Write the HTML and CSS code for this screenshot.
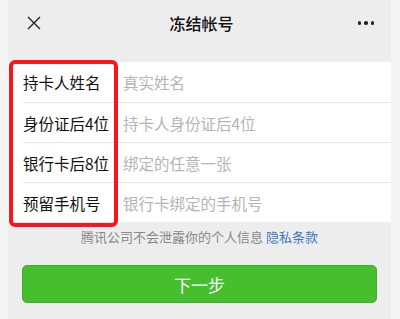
FILE: index.html
```html
<!DOCTYPE html>
<html lang="zh-CN">
<head>
    <meta charset="UTF-8">
    <meta name="viewport" content="width=device-width, initial-scale=1.0">
    <title>冻结帐号</title>
    <link rel="stylesheet" href="styles.css">
</head>
<body>
    <div class="app">
        <div class="header">
            <span class="close">
                <svg width="14" height="14" viewBox="0 0 14 14">
                    <path d="M1 1 L13 13 M13 1 L1 13" stroke="#222" stroke-width="1.4" fill="none"/>
                </svg>
            </span>
            <h1 class="title">冻结帐号</h1>
            <span class="more"><i></i><i></i><i></i></span>
        </div>

        <div class="form">
            <div class="row">
                <label>持卡人姓名</label>
                <input type="text" placeholder="真实姓名">
            </div>
            <div class="row">
                <label>身份证后4位</label>
                <input type="text" placeholder="持卡人身份证后4位">
            </div>
            <div class="row">
                <label>银行卡后8位</label>
                <input type="text" placeholder="绑定的任意一张">
            </div>
            <div class="row">
                <label>预留手机号</label>
                <input type="text" placeholder="银行卡绑定的手机号">
            </div>
            <div class="highlight"></div>
        </div>

        <p class="notice">腾讯公司不会泄露你的个人信息 <a href="#">隐私条款</a></p>

        <button class="next">下一步</button>
    </div>
</body>
</html>
```

FILE: styles.css
```css
* {
    margin: 0;
    padding: 0;
    box-sizing: border-box;
    font-family: "Noto Sans CJK SC", "Noto Sans", sans-serif;
}

body {
    background: #f4f4f4;
    height: 100vh;
    overflow: hidden;
}

.app {
    margin: 0 9px 0 8px;
    min-height: 100vh;
    background: #ededed;
}

.header {
    height: 46px;
    display: flex;
    align-items: center;
    justify-content: space-between;
    padding: 0 17px 0 19px;
}

.close {
    display: flex;
    width: 14px;
}

.title {
    font-size: 16px;
    font-weight: 500;
    color: #111;
    margin-left: 4px;
}

.more {
    display: flex;
    gap: 3px;
    width: 16px;
}

.more i {
    width: 3.5px;
    height: 3.5px;
    border-radius: 50%;
    background: #222;
}

.form {
    position: relative;
    margin-top: 16px;
    background: #fff;
}

.row {
    height: 40px;
    display: flex;
    align-items: center;
    margin-left: 15px;
    border-top: 1px solid #e6e6e6;
}

.row:first-child {
    border-top: none;
}

.row label {
    width: 100px;
    font-size: 15.5px;
    color: #111;
}

.row input {
    flex: 1;
    border: none;
    outline: none;
    font-size: 15.5px;
    background: transparent;
}

.row input::placeholder {
    color: #b4b4b4;
}

.highlight {
    position: absolute;
    left: 1px;
    top: -2px;
    width: 109px;
    height: 167px;
    border: 4px solid #f8161a;
    border-radius: 6px;
}

.notice {
    margin-top: 6px;
    text-align: center;
    font-size: 13px;
    line-height: 18px;
    color: #888;
}

.notice a {
    color: #3f77c1;
    text-decoration: none;
}

.next {
    display: block;
    width: calc(100% - 28px);
    height: 38px;
    margin: 19px 0 0 14px;
    border: 1px solid #3fae2a;
    border-radius: 5px;
    background: #46be2d;
    color: #fff;
    font-size: 17px;
}
```
